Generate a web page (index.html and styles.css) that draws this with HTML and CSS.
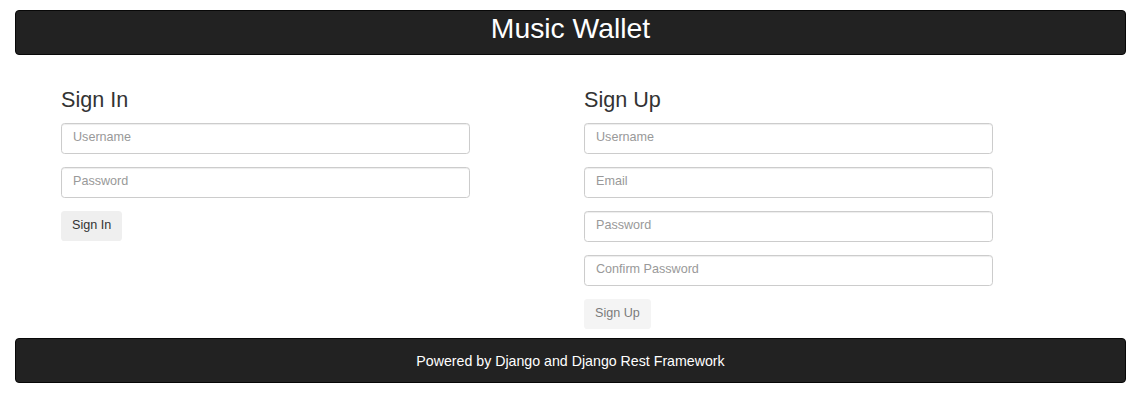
FILE: index.html
```html
<!DOCTYPE html>
<html lang="en">
<head>
<meta charset="utf-8">
<title>Music Wallet</title>
<link rel="stylesheet" href="styles.css">
</head>
<body>
<header class="topbar">
  <div class="brand">Music Wallet</div>
</header>
<main class="forms">
  <section class="panel">
    <h3 class="panel-title">Sign In</h3>
    <form class="form">
      <input class="field" type="text" placeholder="Username">
      <input class="field" type="password" placeholder="Password">
      <button class="btn" type="button">Sign In</button>
    </form>
  </section>
  <section class="panel">
    <h3 class="panel-title">Sign Up</h3>
    <form class="form">
      <input class="field" type="text" placeholder="Username">
      <input class="field" type="email" placeholder="Email">
      <input class="field" type="password" placeholder="Password">
      <input class="field" type="password" placeholder="Confirm Password">
      <button class="btn btn-disabled" type="button" disabled>Sign Up</button>
    </form>
  </section>
</main>
<footer class="bottombar">Powered by Django and Django Rest Framework</footer>
</body>
</html>
```

FILE: styles.css
```css
html, body {
  margin: 0;
  padding: 0;
  background: #fff;
}

body {
  font-family: "Liberation Sans", Arial, Helvetica, sans-serif;
  font-size: 12.6px;
  color: #333;
}

.topbar {
  margin: 10px 15px 0;
  height: 45px;
  box-sizing: border-box;
  background: #222;
  border: 1px solid #080808;
  border-radius: 4px;
  padding-top: 2px;
  text-align: center;
}

.brand {
  color: #fff;
  font-size: 28.3px;
  line-height: 31px;
}

.forms {
  display: grid;
  grid-template-columns: 523px 523px;
  padding-left: 61px;
}

.panel-title {
  margin: 33px 0 11px;
  font-size: 21.6px;
  line-height: 24px;
  font-weight: 400;
  color: #333;
}

.form {
  display: flex;
  flex-direction: column;
  align-items: flex-start;
  gap: 13px;
}

.field {
  display: block;
  width: 409px;
  height: 31px;
  box-sizing: border-box;
  margin: 0;
  padding: 0 11px 4px;
  font-family: inherit;
  font-size: 12.6px;
  color: #555;
  background: #fff;
  border: 1px solid #ccc;
  border-radius: 3.6px;
  box-shadow: inset 0 1px 1px rgba(0, 0, 0, 0.075);
  outline: none;
}

.field::placeholder {
  color: #999;
  opacity: 1;
}

.btn {
  height: 30px;
  box-sizing: border-box;
  padding: 0 11px 3px;
  margin: 0;
  font-family: inherit;
  font-size: 12.6px;
  color: #333;
  background: #efefef;
  border: none;
  border-radius: 3.6px;
}

.btn-disabled {
  opacity: 0.65;
}

.bottombar {
  margin: 9px 15px 0;
  height: 45px;
  box-sizing: border-box;
  background: #222;
  border: 1px solid #080808;
  border-radius: 4px;
  color: #fff;
  font-size: 14.2px;
  display: flex;
  align-items: center;
  justify-content: center;
}
```
